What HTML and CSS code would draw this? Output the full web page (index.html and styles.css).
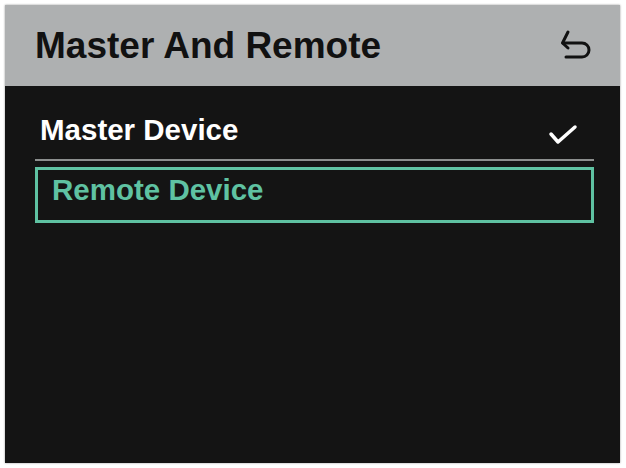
FILE: index.html
```html
<!DOCTYPE html>
<html>
<head>
<meta charset="utf-8">
<link rel="stylesheet" href="styles.css">
</head>
<body>
<div class="screen">
  <header class="header">
    <h1 class="title">Master And Remote</h1>
    <svg class="back" width="32" height="32" viewBox="0 0 32 32">
      <path d="M8 3 L2.5 14 L8 19" fill="none" stroke="#111" stroke-width="3" stroke-linecap="round" stroke-linejoin="round"/>
      <path d="M3 14 H22 A7 7 0 0 1 22 28 H6" fill="none" stroke="#111" stroke-width="3" stroke-linecap="round"/>
    </svg>
  </header>
  <div class="list">
    <div class="item checked">
      <span class="label">Master Device</span>
      <svg class="check" width="30" height="22" viewBox="0 0 30 22">
        <path d="M3 11 L10 19 L27 4" fill="none" stroke="#fff" stroke-width="3.5" stroke-linecap="round" stroke-linejoin="round"/>
      </svg>
    </div>
    <div class="item selected">
      <span class="label">Remote Device</span>
    </div>
  </div>
</div>
</body>
</html>
```
FILE: styles.css
```css
html, body {
  margin: 0;
  padding: 0;
  background: #ffffff;
}
body {
  padding: 5px 6px 5px 5px;
  font-family: "Liberation Sans", Arial, sans-serif;
}
.screen {
  width: 615px;
  height: 458px;
  background: #141414;
  display: flex;
  flex-direction: column;
  box-shadow: 0 0 2px rgba(0,0,0,0.4);
}
.header {
  height: 81px;
  background: #aeb0b1;
  display: flex;
  align-items: center;
  justify-content: space-between;
  padding: 0 28px 0 30px;
  flex-shrink: 0;
}
.title {
  margin: 0;
  font-size: 37px;
  font-weight: bold;
  color: #111;
}
.back {
  display: block;
  margin-top: -1px;
}
.list {
  padding: 14px 26px 0 30px;
  display: flex;
  flex-direction: column;
}
.item {
  display: flex;
  align-items: center;
  justify-content: space-between;
  font-size: 29.5px;
  font-weight: bold;
}
.item.checked {
  height: 61px;
  color: #ffffff;
  padding: 0 16px 0 5px;
  border-bottom: 2px solid #8c8f8e;
  box-sizing: border-box;
}
.check {
  display: block;
  margin-top: 9px;
}
.item.selected {
  margin-top: 6px;
  height: 56px;
  box-sizing: border-box;
  border: 3px solid #5fc2a2;
  color: #5fc2a2;
  padding: 0 0 0 14px;
}
.item.selected .label {
  margin-top: -10px;
}
```
